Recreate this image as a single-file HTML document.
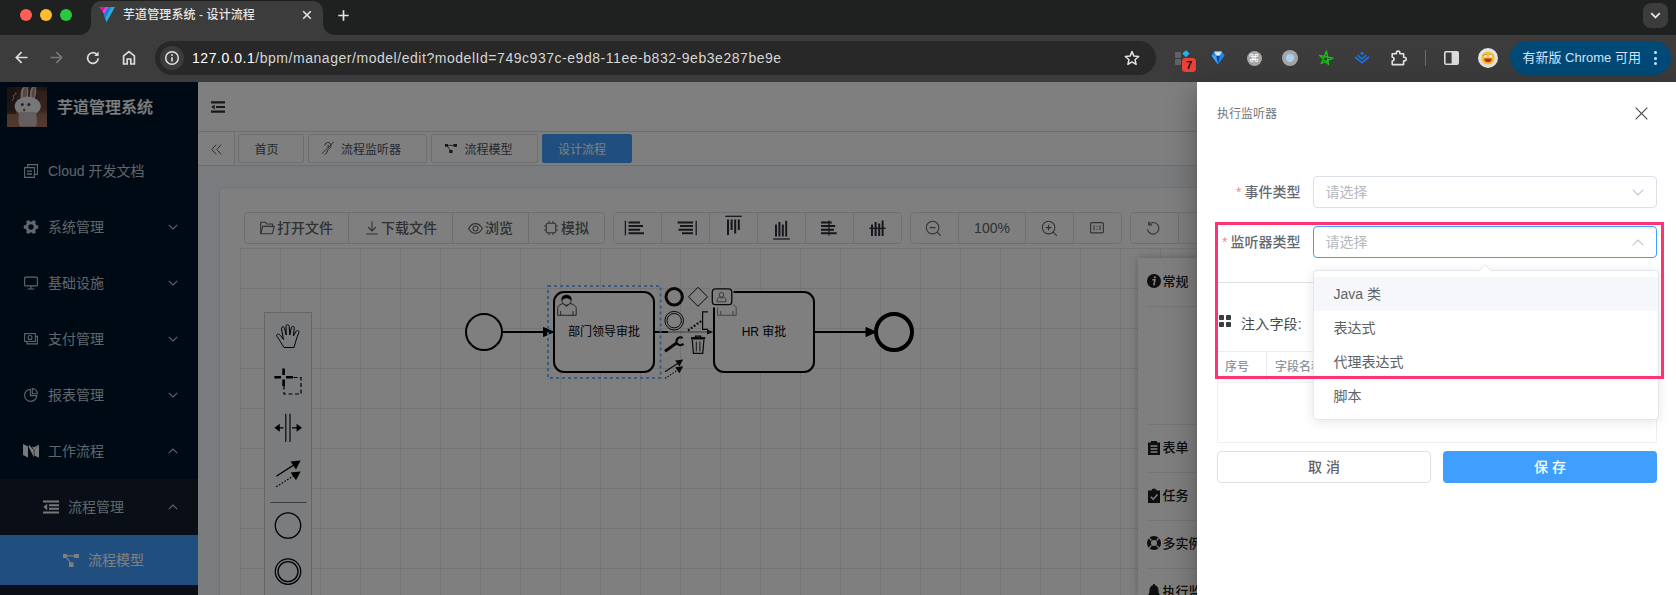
<!DOCTYPE html>
<html lang="zh-CN">
<head>
<meta charset="utf-8">
<title>芋道管理系统 - 设计流程</title>
<style>
*{box-sizing:border-box;margin:0;padding:0}
html,body{width:1676px;height:595px;overflow:hidden;background:#808080}
body{position:relative;font-family:"Liberation Sans","Noto Sans CJK SC",sans-serif;font-size:14px;color:#303133;-webkit-font-smoothing:antialiased}
.abs{position:absolute}
svg{display:block;overflow:visible}
/* ---------- browser chrome ---------- */
#tabstrip{position:absolute;left:0;top:0;width:1676px;height:35px;background:#1f2020}
#toolbar{position:absolute;left:0;top:35px;width:1676px;height:47px;background:#3c3c3c}
#tab{position:absolute;left:91px;top:1px;width:232px;height:34px;background:#3c3c3c;border-radius:10px 10px 0 0}
#tab:before,#tab:after{content:"";position:absolute;bottom:0;width:11px;height:11px;background:radial-gradient(circle at 0 0,transparent 10.5px,#3c3c3c 11px)}
#tab:before{left:-11px}
#tab:after{right:-11px;background:radial-gradient(circle at 100% 0,transparent 10.5px,#3c3c3c 11px)}
.tl{position:absolute;top:9px;width:12px;height:12px;border-radius:50%}
#tabtitle{position:absolute;left:123px;top:6px;font-weight:500;font-size:12px;line-height:18px;color:#e6e6e6;white-space:nowrap;letter-spacing:.1px}
#urlbar{position:absolute;left:155px;top:41px;width:1001px;height:34px;border-radius:17px;background:#282828}
#urltext{position:absolute;left:192px;top:48.300px;font-size:14px;line-height:20px;color:#d6d6d6;white-space:nowrap;letter-spacing:.54px}
#urltext b{font-weight:400;color:#fff}
#pill{position:absolute;left:1510px;top:41px;width:161px;height:34px;border-radius:17px;background:#004a77}
#pill i{position:absolute;left:143.5px;width:3px;height:3px;border-radius:50%;background:#c2e7ff}
#pill span{position:absolute;left:12.5px;top:7px;font-size:13px;line-height:20px;color:#d3e3fd;white-space:nowrap}
/* ---------- app ---------- */
#app{position:absolute;left:0;top:82px;width:1676px;height:513px;overflow:hidden;background:#fff}
#side{position:absolute;left:0;top:0;width:198px;height:513px;background:#001529;color:#bfcbd9}
#side .mi{position:absolute;left:0;width:198px;height:56px;line-height:56px;font-size:14px;white-space:nowrap}
#side .mi span{position:absolute;left:48px;top:0}
#side .mi svg.ic{position:absolute;left:23px;top:21px}
#side .mi svg.ar{position:absolute;left:168px;top:25px}
#main{position:absolute;left:198px;top:0;width:1478px;height:513px;background:#fff}
#navbar{position:absolute;left:0;top:0;width:1478px;height:50px;background:#fff;border-bottom:1px solid #e2e4e8;box-shadow:0 1px 4px rgba(0,21,41,.08)}
#tags{position:absolute;left:0;top:50px;width:1478px;height:34px;background:#fff;border-bottom:1px solid #d8dce5;box-shadow:0 1px 3px 0 rgba(0,0,0,.12),0 0 3px 0 rgba(0,0,0,.04)}
.tag{position:absolute;top:2px;height:29px;line-height:30px;border:1px solid #d8dce5;color:#495060;background:#fff;font-size:12px;white-space:nowrap;border-radius:2px}
.tag.on{background:#409eff;border-color:#409eff;color:#fff}
#content{position:absolute;left:0;top:84px;width:1478px;height:429px;background:#f5f7f9}
#card{position:absolute;left:21px;top:21px;width:1500px;height:500px;background:#fff;border:1px solid #e4e7ed;border-radius:4px}
.bg{position:absolute;top:130px;height:32px;border:1px solid #dcdfe6;border-radius:4px;background:#fff;display:flex}
.bg>div{flex:none;height:30px;border-left:1px solid #dcdfe6;position:relative;font-size:14px;line-height:30px;color:#606266;font-weight:500;white-space:nowrap}
.bg>div:first-child{border-left:0}

#grid{background-color:#fff;background-image:linear-gradient(#e8e8e8 1px,transparent 1px),linear-gradient(90deg,#e8e8e8 1px,transparent 1px),linear-gradient(#fafafa 1px,transparent 1px),linear-gradient(90deg,#fafafa 1px,transparent 1px);background-size:40px 40px,40px 40px,10px 10px,10px 10px}
#palette{background:#f6f8fa;border:1px solid #ccc}
#panel{background:#fff;box-shadow:0 0 8px rgba(0,0,0,.25)}
#panel .pi{position:absolute;left:0;width:480px;height:48px;line-height:47px;font-size:13px;font-weight:500;color:#1b1c1d;white-space:nowrap}
#panel .pi span{position:absolute;left:24.500px;top:0}
#panel .pl{position:absolute;left:8px;width:472px;height:1px;background:#e6ebf5}
#overlay{position:absolute;left:0;top:82px;width:1676px;height:513px;background:rgba(0,0,0,.5)}
/* ---------- drawer ---------- */
#drawer{position:absolute;left:1197px;top:82px;width:479px;height:513px;background:#fff;box-shadow:0 8px 10px -5px rgba(0,0,0,.2),0 16px 24px 2px rgba(0,0,0,.14),0 6px 30px 5px rgba(0,0,0,.12)}

#drawer .lab{position:absolute;left:0;width:103.500px;height:32px;line-height:32px;text-align:right;font-size:14px;font-weight:500;color:#666a70;white-space:nowrap}
#drawer .lab i{font-style:normal;color:#f78989;margin-right:3px;font-weight:400;font-family:"Liberation Sans",sans-serif}
#drawer .sel{position:absolute;left:116px;width:344px;height:32px;border:1px solid #dcdfe6;border-radius:4px;background:#fff}
#drawer .sel span{position:absolute;left:11.500px;top:-.3px;line-height:30px;font-size:14px;color:#b4b8bf;white-space:nowrap}
#drawer .th{font-size:12px;line-height:18px;color:#909399;font-weight:500;white-space:nowrap}
#drawer .btn{height:32px;line-height:30px;border-radius:4px;text-align:center;font-size:14px;font-weight:500;white-space:nowrap}
#dd{position:absolute;left:115.500px;top:188px;width:346px;height:149.500px;background:#fff;border:1px solid #e4e7ed;border-radius:4px;box-shadow:0 2px 12px 0 rgba(0,0,0,.1)}
#dd .opt{position:absolute;left:0;width:344px;height:34px;line-height:34px;padding-left:20px;font-size:14px;color:#606266;white-space:nowrap}
#dd .opt.hov{background:#f5f7fa}
</style>
</head>
<body>
<!-- chrome -->
<div id="tabstrip"></div>
<div id="toolbar"></div>
<div id="tab"></div>
<div class="tl" style="left:20px;background:#ff5f57"></div>
<div class="tl" style="left:40px;background:#febc2e"></div>
<div class="tl" style="left:60px;background:#28c840"></div>
<div id="tabtitle">芋道管理系统 - 设计流程</div>
<div id="urlbar"></div>
<div id="urltext"><b>127.0.0.1</b>/bpm/manager/model/edit?modelId=749c937c-e9d8-11ee-b832-9eb3e287be9e</div>

<!-- tab icons -->
<svg class="abs" style="left:99px;top:7px" width="16" height="16" viewBox="0 0 16 16"><polygon points="0,0 6.2,0 3.6,4.6" fill="#c81fb0"/><polygon points="6.2,0 3.6,4.6 5,7.2 9.2,0" fill="#ff3bc8"/><polygon points="5,7.2 9.2,0 16,0 7.4,15.6 " fill="#29abe2"/><polygon points="9.2,0 12.4,0 6.1,11.3 5,7.2" fill="#1c7fd6"/></svg>
<svg class="abs" style="left:302px;top:10px" width="10" height="10" viewBox="0 0 10 10"><path d="M1.2 1.2L8.8 8.8M8.8 1.2L1.2 8.8" stroke="#e3e3e3" stroke-width="1.6" fill="none"/></svg>
<svg class="abs" style="left:337.500px;top:9.500px" width="11" height="11" viewBox="0 0 11 11"><path d="M5.500 .3V10.700M.3 5.500H10.700" stroke="#e3e3e3" stroke-width="1.7" fill="none"/></svg>
<div class="abs" style="left:1643px;top:3px;width:25px;height:25px;border-radius:8px;background:#3c3c3c"></div>
<svg class="abs" style="left:1650px;top:12px" width="11" height="7" viewBox="0 0 11 7"><path d="M1.2 1.2L5.5 5.4L9.8 1.2" stroke="#e3e3e3" stroke-width="1.8" fill="none"/></svg>
<!-- nav icons -->
<svg class="abs" style="left:15px;top:51px" width="13" height="13" viewBox="0 0 13 13"><path d="M12.5 6.5H1.8M6.6 1.2L1.3 6.5L6.6 11.8" stroke="#dcdcdc" stroke-width="1.7" fill="none"/></svg>
<svg class="abs" style="left:50px;top:51px" width="13" height="13" viewBox="0 0 13 13"><path d="M.5 6.5H11.2M6.4 1.2L11.7 6.5L6.4 11.8" stroke="#777" stroke-width="1.7" fill="none"/></svg>
<svg class="abs" style="left:86px;top:51px" width="14" height="14" viewBox="0 0 14 14"><path d="M12.2 7.2A5.3 5.3 0 1 1 10.6 3.2" stroke="#dcdcdc" stroke-width="1.7" fill="none"/><path d="M12.6 .6V5H8.2Z" fill="#dcdcdc"/></svg>
<svg class="abs" style="left:122px;top:50px" width="14" height="15" viewBox="0 0 14 15"><path d="M1.6 14V5.8L7 1.6L12.4 5.8V14H8.8V9H5.2V14Z" stroke="#dcdcdc" stroke-width="1.7" fill="none" stroke-linejoin="miter"/></svg>
<div class="abs" style="left:160px;top:46px;width:24px;height:24px;border-radius:12px;background:#3c3c3c"></div>
<svg class="abs" style="left:164px;top:50px" width="16" height="16" viewBox="0 0 16 16"><circle cx="8" cy="8" r="6.3" stroke="#e3e3e3" stroke-width="1.5" fill="none"/><path d="M8 7.2V11.4" stroke="#e3e3e3" stroke-width="1.6"/><circle cx="8" cy="5" r=".95" fill="#e3e3e3"/></svg>
<svg class="abs" style="left:1124px;top:50px" width="16" height="16" viewBox="0 0 16 16"><path d="M8 1.6L9.9 6.1L14.7 6.5L11 9.7L12.1 14.4L8 11.9L3.9 14.4L5 9.7L1.3 6.5L6.1 6.1Z" stroke="#e3e3e3" stroke-width="1.5" fill="none" stroke-linejoin="round"/></svg>

<!-- extension icons -->
<div class="abs" style="left:1175px;top:52px;width:6px;height:6px;background:#5f6368;border-radius:1px"></div>
<div class="abs" style="left:1175px;top:59px;width:6px;height:6px;background:#5f6368;border-radius:1px"></div>
<svg class="abs" style="left:1182px;top:50px" width="8" height="8" viewBox="0 0 8 8"><path d="M4 .3L7.7 3.6L4 7.2L.3 3.6Z" fill="#1db4f0"/></svg>
<div class="abs" style="left:1182px;top:58px;width:14px;height:14px;border-radius:3.5px;background:#ea4335;color:#111;font-size:11px;font-weight:700;line-height:14px;text-align:center">7</div>
<svg class="abs" style="left:1211px;top:51px" width="14" height="14" viewBox="0 0 14 14"><path d="M3.2 .6H10.8L13.6 4.4L7 13.6L.4 4.4Z" fill="#1e88e5"/><path d="M3.2 .6L5 4.4L7 .6L9 4.4L10.8 .6Z" fill="#bfe3ff"/><path d="M5 4.4H9L7 13.6Z" fill="#0d47a1"/><path d="M.4 4.4H5L7 13.6Z" fill="#42a5f5"/><path d="M5 4.4L7 .6L9 4.4Z" fill="#fff"/></svg>
<div class="abs" style="left:1246.5px;top:50.5px;width:15px;height:15px;border-radius:50%;background:#a9a9a9;color:#fff;font-size:11px;line-height:15px;text-align:center;font-family:'DejaVu Sans',sans-serif">&#8984;</div>
<div class="abs" style="left:1282px;top:50px;width:16px;height:16px;border-radius:50%;background:#a6a6a6"></div>
<div class="abs" style="left:1286px;top:54px;width:8px;height:8px;border-radius:50%;background:#a9d3f3"></div>
<svg class="abs" style="left:1318px;top:50px" width="16" height="16" viewBox="0 0 16 16"><path d="M8.6 1L10.6 14.6L1.4 5.4L15 8.2L3.2 13.4Z" stroke="#19c319" stroke-width="1.3" fill="none" stroke-linejoin="round"/></svg>
<svg class="abs" style="left:1354px;top:51px" width="16" height="14" viewBox="0 0 16 14"><path d="M1 6L8 11.6L15 6" stroke="#1a73e8" stroke-width="1.7" fill="none"/><path d="M3.6 4.2L8 7.8L12.4 4.2" stroke="#1a73e8" stroke-width="1.7" fill="none"/><path d="M8 .6L10 2.4L8 4.2L6 2.4Z" fill="#1a73e8"/></svg>
<svg class="abs" style="left:1390px;top:49px" width="18" height="18" viewBox="0 0 18 18"><path d="M2.2 4.8H6.3V3.9A1.8 1.8 0 0 1 9.9 3.9V4.8H13.6V8.3H14.4A1.8 1.8 0 0 1 14.4 11.9H13.6V15.6H2.2V12A1.9 1.9 0 0 0 2.2 8.2Z" stroke="#e3e3e3" stroke-width="1.6" fill="none" stroke-linejoin="round"/></svg>
<div class="abs" style="left:1424.5px;top:50px;width:1.5px;height:16px;background:#6b6b6b"></div>
<svg class="abs" style="left:1444px;top:51px" width="15" height="14" viewBox="0 0 15 14"><rect x=".8" y=".8" width="13.4" height="12.4" rx="1.2" stroke="#dcdcdc" stroke-width="1.6" fill="none"/><rect x="7.6" y="1" width="6.4" height="12" fill="#dcdcdc"/></svg>
<div class="abs" style="left:1478px;top:48px;width:20px;height:20px;border-radius:50%;background:#e4e4e4"></div>
<svg class="abs" style="left:1481px;top:51px" width="14" height="14" viewBox="0 0 14 14"><circle cx="7" cy="7" r="6.6" fill="#fbc02d"/><path d="M3.2 7.4H10.8A3.8 3.8 0 0 1 3.2 7.4Z" fill="#c62828"/><path d="M2.6 4.6L5.4 3.6M8.6 3.6L11.4 4.6" stroke="#5d4037" stroke-width="1" fill="none"/><circle cx="9.6" cy="5" r="1.6" fill="#fff"/><circle cx="4.4" cy="5" r="1.2" fill="#fff"/></svg>
<div id="pill"><span>有新版 Chrome 可用</span><i style="top:10px"></i><i style="top:15.5px"></i><i style="top:21px"></i></div>

<!-- app -->
<div id="app">
  <div id="side">

    <svg class="abs" style="left:7px;top:5px" width="40" height="40" viewBox="0 0 40 40">
      <defs><linearGradient id="lg" x1="0" y1="0" x2="0" y2="1"><stop offset="0" stop-color="#3e2e2a"/><stop offset=".55" stop-color="#5a4038"/><stop offset=".7" stop-color="#9a6a58"/><stop offset="1" stop-color="#a87462"/></linearGradient></defs>
      <rect width="40" height="40" fill="url(#lg)"/>
      <rect x="0" y="0" width="9" height="27" fill="#2a201e" opacity=".6"/><rect x="30" y="4" width="10" height="20" fill="#8a5a48" opacity=".35"/>
      <path d="M14 14C13 6 14 1 17 0H21C22 5 21 10 20 14Z" fill="#d9d2d0"/><path d="M16 12C15.500 6 16 2 18 0H20C20.500 5 19.500 9 19 12Z" fill="#b98a80"/>
      <path d="M23 14C22.500 7 23 2 25 0H29C30 5 28.500 10 27 14Z" fill="#d9d2d0"/><path d="M24.500 12C24.500 7 25 3 26.500 0H28C28.500 4 27.500 9 26.500 12Z" fill="#b98a80"/>
      <ellipse cx="20.700" cy="19.200" rx="13" ry="9.600" fill="#eeeeee"/>
      <path d="M12 25C11 32 11.500 37 13 39.500H29C30.500 36 30 30 28.500 25Z" fill="#cbbcbc"/>
      <circle cx="15.300" cy="17.600" r="1.500" fill="#35507a"/><circle cx="21.800" cy="17.600" r="1.600" fill="#35507a"/>
      <ellipse cx="17.200" cy="23" rx="1.100" ry="1.400" fill="#8a4a3a"/>
      <path d="M5 14L7 11L6 9L9 7L8.500 5" stroke="#cfcfcf" stroke-width=".8" fill="none"/>
    </svg>
    <div class="abs" style="left:57px;top:14px;font-size:16px;line-height:24px;font-weight:500;-webkit-text-stroke:.2px #fff;color:#fff;white-space:nowrap">芋道管理系统</div>

    <div class="mi" style="top:61px"><svg class="ic" style="left:24px" width="14" height="14" viewBox="0 0 14 14"><path d="M.6 3.600H10.400V13.400H.6Z" stroke="#bfcbd9" stroke-width="1.100" fill="none"/><path d="M3.700 3.500V.6H13.400V10.400H10.500" stroke="#bfcbd9" stroke-width="1.100" fill="none"/><path d="M3 7.200H8M3 10H8" stroke="#bfcbd9" stroke-width="1.300"/></svg><span>Cloud 开发文档</span></div>
    <div class="mi" style="top:117px"><svg class="ic" style="left:24px" width="14" height="14" viewBox="0 0 14 14"><circle cx="7" cy="7" r="4.100" stroke="#c4cedb" stroke-width="2.900" fill="none"/><rect x="5.300" y="-.2" width="3.400" height="3.400" rx=".5" transform="rotate(30 7 7)" fill="#c4cedb" /><rect x="5.300" y="-.2" width="3.400" height="3.400" rx=".5" transform="rotate(90 7 7)" fill="#c4cedb" /><rect x="5.300" y="-.2" width="3.400" height="3.400" rx=".5" transform="rotate(150 7 7)" fill="#c4cedb" /><rect x="5.300" y="-.2" width="3.400" height="3.400" rx=".5" transform="rotate(210 7 7)" fill="#c4cedb" /><rect x="5.300" y="-.2" width="3.400" height="3.400" rx=".5" transform="rotate(270 7 7)" fill="#c4cedb" /><rect x="5.300" y="-.2" width="3.400" height="3.400" rx=".5" transform="rotate(330 7 7)" fill="#c4cedb" /></svg><span>系统管理</span><svg class="ar" width="10" height="6" viewBox="0 0 10 6"><path d="M.8 .8L5 5L9.2 .8" stroke="#bfcbd9" stroke-width="1.1" fill="none"/></svg></div>
    <div class="mi" style="top:173px"><svg class="ic" style="left:24px" width="14" height="14" viewBox="0 0 14 14"><rect x=".6" y="1.100" width="12.800" height="8.800" rx="1" stroke="#bfcbd9" stroke-width="1.100" fill="none"/><path d="M7 10V12.800M3.600 13H10.400" stroke="#bfcbd9" stroke-width="1.100"/></svg><span>基础设施</span><svg class="ar" width="10" height="6" viewBox="0 0 10 6"><path d="M.8 .8L5 5L9.2 .8" stroke="#bfcbd9" stroke-width="1.1" fill="none"/></svg></div>
    <div class="mi" style="top:229px"><svg class="ic" style="left:24px" width="14" height="14" viewBox="0 0 14 14"><rect x=".6" y="1.600" width="10.800" height="7.800" stroke="#bfcbd9" stroke-width="1.100" fill="none"/><circle cx="6" cy="5.500" r="2" stroke="#bfcbd9" stroke-width="1.100" fill="none"/><path d="M3 9.500V11.900H13.400V4.400H11.500" stroke="#bfcbd9" stroke-width="1.100" fill="none"/></svg><span>支付管理</span><svg class="ar" width="10" height="6" viewBox="0 0 10 6"><path d="M.8 .8L5 5L9.2 .8" stroke="#bfcbd9" stroke-width="1.1" fill="none"/></svg></div>
    <div class="mi" style="top:285px"><svg class="ic" style="left:24px" width="14" height="14" viewBox="0 0 14 14"><path d="M6.400 1.200A6.100 6.100 0 1 0 12.800 7.600H6.400Z" stroke="#bfcbd9" stroke-width="1.100" fill="none"/><path d="M8.300 .6A5.200 5.200 0 0 1 13.400 5.700H8.300Z" stroke="#bfcbd9" stroke-width="1.100" fill="none"/></svg><span>报表管理</span><svg class="ar" width="10" height="6" viewBox="0 0 10 6"><path d="M.8 .8L5 5L9.2 .8" stroke="#bfcbd9" stroke-width="1.1" fill="none"/></svg></div>
    <div class="mi" style="top:341px"><svg class="ic" style="left:23px" width="16" height="14" viewBox="0 0 16 14"><path d="M0 0L5 2.500V13.600L0 11.100Z" fill="#f4f4f4"/><path d="M5.600 2.800L10.800 13.200V6.300L6 .8Z" fill="#f4f4f4"/><path d="M11.400 5.800L16 .4V13.800L11.400 11.500Z" fill="#f4f4f4"/><path d="M10.900 6.200L15.600 .8L10.900 3.300L9 2.600Z" fill="#f4f4f4"/></svg><span>工作流程</span><svg class="ar" width="10" height="6" viewBox="0 0 10 6"><path d="M.8 5.2L5 1L9.2 5.2" stroke="#bfcbd9" stroke-width="1.1" fill="none"/></svg></div>
    <div class="abs" style="left:0;top:397px;width:198px;height:116px;background:#141f2f"></div>
    <div class="mi" style="top:397px"><svg class="ic" style="left:43px;top:21px" width="16" height="14" viewBox="0 0 16 14"><path d="M0 1.400H16M6 5.200H16M6 8.800H16M0 12.600H16" stroke="#f0f0f0" stroke-width="2"/><path d="M4.200 3.800V10.200L.4 7Z" fill="#f0f0f0"/></svg><span style="left:68px">流程管理</span><svg class="ar" width="10" height="6" viewBox="0 0 10 6"><path d="M.8 5.2L5 1L9.2 5.2" stroke="#bfcbd9" stroke-width="1.1" fill="none"/></svg></div>
    <div class="abs" style="left:0;top:453px;width:198px;height:50px;background:#409eff"></div>
    <div class="mi" style="top:453px;height:50px;line-height:50px;color:#fff"><svg class="ic" style="left:63px;top:19px" width="16" height="13" viewBox="0 0 16 13"><rect x="0" y="0" width="4" height="4" fill="#fff"/><rect x="11" y="0" width="5" height="4" fill="#fff"/><rect x="6" y="8.500" width="4.500" height="4.500" fill="#fff"/><path d="M3 1.800H12M3.500 3.500L8 9.500" stroke="#fff" stroke-width="1.200"/></svg><span style="left:88px">流程模型</span></div>
  </div>
  <div id="main">

    <div id="navbar"><svg class="abs" style="left:13px;top:19px" width="14" height="12" viewBox="0 0 14 12"><path d="M0 1.400H14M5 6H14M0 10.600H14" stroke="#303133" stroke-width="2.200"/><path d="M3.600 3.600V8.400L.3 6Z" fill="#303133"/></svg></div>
    <div id="tags">
      <svg class="abs" style="left:13px;top:12px" width="11" height="11" viewBox="0 0 11 11"><path d="M5.200 .6L.8 5.500L5.200 10.400M10.200 .6L5.800 5.500L10.200 10.400" stroke="#5a5e66" stroke-width="1" fill="none"/></svg>
      <div class="abs" style="left:36px;top:0;width:1px;height:34px;background:#d8dce5"></div>
      <div class="tag" style="left:40px;width:66px;padding-left:15.500px">首页</div>
      <div class="tag" style="left:110px;width:119px;padding-left:32px"><svg class="abs" style="left:12px;top:6px" width="14" height="14" viewBox="0 0 14 14"><path d="M3.500 13.500C5.500 13 6 11.500 6.300 10C6.600 8.500 8.500 8 9.500 6.500C10.500 5 10 2.500 8 1.700C6 1 4 2.200 3.800 4.500" stroke="#495060" stroke-width="1" fill="none"/><path d="M6 5.500C6.500 4.200 8 4.300 8 5.600C8 6.500 7 7 6.500 7.500" stroke="#495060" stroke-width=".9" fill="none"/><path d="M12.800 .8L.8 12.800" stroke="#495060" stroke-width=".9"/></svg>流程监听器</div>
      <div class="tag" style="left:233px;width:107px;padding-left:32.500px"><svg class="abs" style="left:12.500px;top:9px" width="12" height="9" viewBox="0 0 12 9"><rect x="0" y="0" width="3" height="2.800" fill="#2b2f3a"/><rect x="8.500" y="0" width="3.500" height="2.800" fill="#2b2f3a"/><rect x="4.300" y="6" width="3.200" height="3" fill="#2b2f3a"/><path d="M2.500 1.400H9M2.500 2.200L5.500 6.500" stroke="#2b2f3a" stroke-width=".8"/></svg>流程模型</div>
      <div class="tag on" style="left:344px;width:90px;padding-left:15px">设计流程</div>
    </div>
    <div id="content"><div id="card"></div></div>


    <!-- canvas grid -->
    <div class="abs" id="grid" style="left:42px;top:166px;width:1436px;height:347px"></div>
    <!-- properties panel -->
    <div class="abs" id="panel" style="left:940px;top:176px;width:480px;height:340px">
      <div class="pi" style="top:0"><svg class="abs" style="left:9px;top:16.0px" width="14" height="14" viewBox="0 0 14 14"><circle cx="7" cy="7" r="7" fill="#1b1c1d"/><path d="M5.300 5.800H8L6.900 10.600H8" stroke="#fff" stroke-width="1.500" fill="none"/><circle cx="7.900" cy="3.300" r="1.100" fill="#fff"/></svg><span>常规</span></div>
      <div class="pl" style="top:48px"></div>
      <div class="pl" style="top:166px"></div>
      <div class="pi" style="top:166px"><svg class="abs" style="left:10px;top:17.0px" width="12" height="14" viewBox="0 0 12 14"><path d="M0 1.500H3V0H9V1.500H12V14H0Z" fill="#1b1c1d"/><path d="M2.500 5H9.500M2.500 8H9.500M2.500 11H9.500" stroke="#fff" stroke-width="1.300"/></svg><span>表单</span></div>
      <div class="pl" style="top:214px"></div>
      <div class="pi" style="top:214px"><svg class="abs" style="left:10px;top:16.0px" width="12" height="15" viewBox="0 0 12 15"><path d="M0 2.500H3.500C3.500 -.3 8.500 -.3 8.500 2.500H12V15H0Z" fill="#1b1c1d"/><path d="M2.800 8.800L5.200 11.200L9.500 6.500" stroke="#fff" stroke-width="1.600" fill="none"/></svg><span>任务</span></div>
      <div class="pl" style="top:262px"></div>
      <div class="pi" style="top:262px"><svg class="abs" style="left:9px;top:16.0px" width="14" height="14" viewBox="0 0 14 14"><circle cx="7" cy="7" r="5" stroke="#1b1c1d" stroke-width="4" fill="none"/><path d="M2 2L4.500 4.500M12 2L9.500 4.500M2 12L4.500 9.500M12 12L9.500 9.500" stroke="#fff" stroke-width="1.300"/></svg><span>多实例</span></div>
      <div class="pl" style="top:310px"></div>
      <div class="pi" style="top:310px"><svg class="abs" style="left:9px;top:16.0px" width="14" height="15" viewBox="0 0 14 15"><path d="M7 0C7.800 0 8.200 .6 8.200 1.300C10.500 2 11.500 4 11.500 6.500C11.500 9.500 12.500 10.500 14 12H0C1.500 10.500 2.500 9.500 2.500 6.500C2.500 4 3.500 2 5.800 1.300C5.800 .6 6.200 0 7 0ZM5 13H9C9 15.600 5 15.600 5 13Z" fill="#1b1c1d"/></svg><span>执行监听器</span></div>
    </div>
    <!-- palette -->
    <div class="abs" id="palette" style="left:66px;top:230px;width:48px;height:300px">
      <svg class="abs" style="left:-1px;top:-1px" width="48" height="300" viewBox="264 312 48 300">
        <g stroke="#000" fill="none" stroke-width="1">
          <path d="M284 347.500C281 343 279.500 339.500 277 336.500C275.500 334.500 278.500 333 280.500 335.500L283.500 339.500L281.500 329C281 326.500 284 326 284.600 328.500L286.200 335L286 326.500C286 324 289 324 289.200 326.500L289.800 335L291.300 328C291.800 325.500 294.600 326 294.300 328.500L293.300 336L296 331.500C297.300 329.500 299.800 330.800 298.600 333.200C296.500 338 295.500 342.500 294 347.500Z"/>
        </g>
        <g stroke="#000" fill="none">
          <path d="M283.600 368.500V375M283.600 379.500V386M274.400 377.300H281M286 377.300H293" stroke-width="2.600"/>
          <path d="M287 377.500H301V394H284V381" stroke-width="1.200" stroke-dasharray="4 2.500"/>
          <path d="M285.800 413.700V442M290 413.700V442" stroke-width="1.100"/>
          <path d="M277 427.800H283.500M292 427.800H298.500" stroke-width="1.200"/>
          <path d="M274.400 427.800L279.800 423.800V431.800Z M302 427.800L296.600 423.800V431.800Z" fill="#000" stroke="none"/>
          <path d="M276.300 476.200L294 464.900" stroke-width="1.300"/>
          <path d="M300.600 460.600L296 469.400L290.600 461.600Z" fill="#000" stroke="none"/>
          <path d="M276.300 486.700L294 475.600" stroke-width="1.200" stroke-dasharray="1.600 1.600"/>
          <path d="M300.600 471.400L296 480.200L290.600 472.400Z" fill="#000" stroke="none"/>
          <path d="M270.500 502.500H306.500" stroke="#777" stroke-width="1"/>
          <circle cx="288" cy="525.500" r="12.700" stroke-width="1.300"/>
          <circle cx="288" cy="571.600" r="12.700" stroke-width="1.300"/>
          <circle cx="288" cy="571.600" r="10" stroke-width="1.300"/>
        </g>
      </svg>
    </div>
    <!-- bpmn diagram : svg in page coordinates -->
    <svg class="abs" style="left:-198px;top:-82px" width="1676" height="595" viewBox="0 0 1676 595">
      <g stroke="#000" fill="none" stroke-width="2">
        <circle cx="484" cy="332" r="18" fill="#fff"/>
        <path d="M502 332H547"/>
        <path d="M553.500 332L543.500 327.500V336.500Z" fill="#000" stroke-width="1"/>
        <rect x="554" y="292" width="100" height="80" rx="10" fill="#fff"/>
        <path d="M654 332H668"/>
        <path d="M668 332H708" stroke="#333" stroke-width=".7"/>
        <path d="M713.500 332L707 329.600V334.400Z" fill="#222" stroke="none"/>
        <rect x="714" y="292" width="100" height="80" rx="10" fill="#fff"/>
        <path d="M814 332H869"/>
        <path d="M876 332L866 327.500V336.500Z" fill="#000" stroke-width="1"/>
        <circle cx="894" cy="332" r="18" stroke-width="4" fill="#fff"/>
      </g>
      <rect x="548" y="286" width="112.500" height="92" fill="none" stroke="#7cb4ff" stroke-width="2" stroke-dasharray="3 3" stroke-dashoffset="0"/>
      <!-- user icon task1 -->
      <g stroke="#000" stroke-width=".7" fill="#fff">
        <path d="M557.700 315.300V308.500C557.700 305.500 560 304.300 563.300 303.500L566.500 306.500L569.800 303.500C573 304.300 576.200 305.500 576.200 308.500V315.300Z"/>
        <path d="M560.700 315.300V311M573 315.300V311" fill="none"/>
        <circle cx="566.500" cy="300.500" r="4.600"/>
        <path d="M561.900 300C561.500 296 564 295.200 566.500 295.200C569 295.200 571.500 296 571.100 300C569.500 298.500 568 298 566.500 298C565 298 563.500 298.500 561.900 300Z" fill="#000"/>
      </g>
      <!-- user icon task2 (partly hidden) -->
      <g stroke="#555" stroke-width=".7" fill="#fff">
        <path d="M717.700 315.300V308.500C717.700 305.500 720 304.300 723.300 303.500L726.500 306.500L729.800 303.500C733 304.300 736.200 305.500 736.200 308.500V315.300Z"/>
        <path d="M720.700 315.300V311M733 315.300V311" fill="none"/>
      </g>
      <!-- context pad -->
      <rect x="710.500" y="286" width="23" height="21.500" fill="#fff"/>
      <g stroke="#111" fill="none">
        <circle cx="674.200" cy="296.800" r="8.200" stroke-width="3"/>
        <path d="M698 287.300L707.500 296.800L698 306.300L688.500 296.800Z" stroke-width="1" fill="#fff"/>
        <rect x="712.300" y="288.800" width="19.500" height="15.800" rx="3.200" stroke-width="1.300" fill="#fff"/>
        <g stroke-width=".6" stroke="#222"><path d="M717.200 301.800V299.400C717.200 298 718.500 297.500 719.800 297.200L721.500 298.600L723.200 297.200C724.500 297.500 725.800 298 725.800 299.400V301.800Z"/><circle cx="721.500" cy="294.800" r="2.300"/></g>
        <circle cx="674.200" cy="320.700" r="9.300" stroke-width="1" fill="#fff"/>
        <circle cx="674.200" cy="320.700" r="7.200" stroke-width="1"/>
        <path d="M708 311.800H702.600V329.400H708" stroke-width="1.200"/>
        <path d="M688 330.500L702 320.500" stroke-width="2.200" stroke-dasharray="1.800 1.800"/>
        <path d="M665 351.300L677 342.800" stroke-width="3"/>
        <path d="M682.600 338A3.900 3.900 0 1 0 683.400 343.800" stroke-width="2.300"/>
        <path d="M691 338.300H705.200" stroke-width="2.400"/><path d="M695.500 337.500V336.200H700.700V337.500" stroke-width="1.300"/>
        <path d="M692.300 340L693.400 353.300H702.800L703.900 340" stroke-width="1.200"/>
        <path d="M696.300 341.500V351.500M699.900 341.500V351.500" stroke-width=".9"/>
        <path d="M665 371.800L678 363.200" stroke-width="1.100"/>
        <path d="M683.200 359.600L679.400 366.600L675.200 360.600Z" fill="#111" stroke="none"/>
        <path d="M665 378.400L678 369.800" stroke-width="1.100" stroke-dasharray="1.500 1.500"/>
        <path d="M683.200 366.200L679.400 373.200L675.200 367.200Z" fill="#111" stroke="none"/>
      </g>
      <text x="604" y="336.300" font-size="12" text-anchor="middle" fill="#000" font-family="'Liberation Sans','Noto Sans CJK SC',sans-serif">部门领导审批</text>
      <text x="764" y="336.300" font-size="12" text-anchor="middle" fill="#000" font-family="'Liberation Sans','Noto Sans CJK SC',sans-serif">HR 审批</text>
    </svg>
    <!-- toolbars (coords relative to #main) -->
    <div class="bg" style="left:46px;width:361px">
      <div style="width:103px"><svg class="abs" style="left:15px;top:8px" width="15" height="14" viewBox="0 0 15 14"><path d="M.7 12.800V1.200H5.200L6.600 3H12.600V5.300" stroke="#606266" stroke-width="1.100" fill="none" stroke-linejoin="round"/><path d="M.7 12.800L2.800 5.400H14.300L12.200 12.800Z" stroke="#606266" stroke-width="1.100" fill="none" stroke-linejoin="round"/></svg><span style="position:absolute;left:32px">打开文件</span></div>
      <div style="width:104px"><svg class="abs" style="left:17px;top:8px" width="12" height="14" viewBox="0 0 12 14"><path d="M6 .5V9.800M2 6L6 10L10 6M.3 13H11.700" stroke="#606266" stroke-width="1.100" fill="none"/></svg><span style="position:absolute;left:32px">下载文件</span></div>
      <div style="width:76px"><svg class="abs" style="left:15px;top:9.500px" width="15" height="11" viewBox="0 0 15 11"><path d="M.6 5.500C2.500 2.200 5 .6 7.500 .6C10 .6 12.500 2.200 14.400 5.500C12.500 8.800 10 10.400 7.500 10.400C5 10.400 2.500 8.800 .6 5.500Z" stroke="#606266" stroke-width="1.100" fill="none"/><circle cx="7.500" cy="5.500" r="2.500" stroke="#606266" stroke-width="1.100" fill="none"/></svg><span style="position:absolute;left:32px">浏览</span></div>
      <div style="width:76px"><svg class="abs" style="left:15px;top:8px" width="14" height="14" viewBox="0 0 14 14"><rect x="2.300" y="2.300" width="9.400" height="9.400" rx="1.500" stroke="#606266" stroke-width="1.100" fill="none"/><path d="M5 0V2M9 0V2M5 12V14M9 12V14M0 5H2M0 9H2M12 5H14M12 9H14" stroke="#606266" stroke-width="1.100"/></svg><span style="position:absolute;left:32px">模拟</span></div>
    </div>
    <div class="bg" style="left:415px;width:289px">
      <div style="width:47px"><svg class="abs" style="left:10px;top:7px" width="22" height="16" viewBox="0 0 22 16"><path d="M1.400 .7V15.300" stroke="#2b2f3a" stroke-width="1.300"/><path d="M4.500 2.400H16M4.500 6H19M4.500 9.700H16M4.500 13.200H20" stroke="#2b2f3a" stroke-width="2"/></svg></div>
      <div style="width:48px"><svg class="abs" style="left:14px;top:7px" width="22" height="16" viewBox="0 0 22 16"><path d="M20.200 .7V15.300" stroke="#2b2f3a" stroke-width="1.300"/><path d="M1.500 2.400H17M4 6H17M2.500 9.700H17M6 13.200H17" stroke="#2b2f3a" stroke-width="2"/></svg></div>
      <div style="width:48px"><svg class="abs" style="left:15px;top:2px" width="17" height="22" viewBox="0 0 17 22"><path d="M.2 1.300H16.800" stroke="#2b2f3a" stroke-width="1.300"/><path d="M3 4.500V20M6.600 4.500V15M10.200 4.500V18.500M13.800 4.500V15" stroke="#2b2f3a" stroke-width="2"/></svg></div>
      <div style="width:48px"><svg class="abs" style="left:15px;top:6px" width="17" height="22" viewBox="0 0 17 22"><path d="M.2 20H16.800" stroke="#2b2f3a" stroke-width="1.300"/><path d="M3 5.500V17.500M6.400 3V17.500M9.800 5.500V17.500M13.200 1.800V17.500" stroke="#2b2f3a" stroke-width="2"/></svg></div>
      <div style="width:48px"><svg class="abs" style="left:14px;top:7px" width="18" height="16" viewBox="0 0 18 16"><path d="M9 .5V15.500" stroke="#2b2f3a" stroke-width="1.300"/><path d="M1 2.400H11.800M1 6H15.300M1 9.700H14M1 13.200H16.700" stroke="#2b2f3a" stroke-width="2"/></svg></div>
      <div style="width:48px"><svg class="abs" style="left:15px;top:7px" width="17" height="16" viewBox="0 0 17 16"><path d="M.3 8.300H16.700" stroke="#2b2f3a" stroke-width="1.300"/><path d="M3 4.500V16M6.600 2V16M10.200 3.500V16M13.600 .5V16" stroke="#2b2f3a" stroke-width="2"/></svg></div>
    </div>
    <div class="bg" style="left:712px;width:212px">
      <div style="width:47px"><svg class="abs" style="left:14px;top:6.500px" width="17" height="17" viewBox="0 0 17 17"><circle cx="7.600" cy="7.600" r="6.300" stroke="#606266" stroke-width="1.100" fill="none"/><path d="M12.200 12.200L15.800 15.800M4.800 7.600H10.400" stroke="#606266" stroke-width="1.100"/></svg></div>
      <div style="width:67px;text-align:center;font-weight:400">100%</div>
      <div style="width:48px"><svg class="abs" style="left:15px;top:7px" width="17" height="17" viewBox="0 0 17 17"><circle cx="7.600" cy="7.600" r="6.300" stroke="#606266" stroke-width="1.100" fill="none"/><path d="M12.200 12.200L15.800 15.800M4.800 7.600H10.400M7.600 4.800V10.400" stroke="#606266" stroke-width="1.100"/></svg></div>
      <div style="width:48px"><svg class="abs" style="left:16px;top:9px" width="14" height="12" viewBox="0 0 14 12"><rect x=".6" y=".6" width="12.800" height="10.300" rx="1.200" stroke="#606266" stroke-width="1.100" fill="none"/><path d="M4 3.300V8.200M10 3.300V8.200" stroke="#606266" stroke-width="1.100"/><path d="M7 3.800V4.800M7 6.700V7.700" stroke="#606266" stroke-width="1.100"/></svg></div>
    </div>
    <div class="bg" style="left:932px;width:200px">
      <div style="width:47px"><svg class="abs" style="left:15px;top:8px" width="14" height="14" viewBox="0 0 14 14"><path d="M2.600 3.600A5.800 5.800 0 1 1 1.400 8.400" stroke="#606266" stroke-width="1.100" fill="none"/><path d="M2.800 .6V3.900H6.100" stroke="#606266" stroke-width="1.100" fill="none"/></svg></div>
      <div style="width:48px"></div><div style="width:48px"></div>
    </div>
  </div>
</div>
<div id="overlay"></div>

<div id="drawer">
  <div class="abs" style="left:20px;top:23px;font-size:12px;line-height:18px;color:#72767b;white-space:nowrap">执行监听器</div>
  <svg class="abs" style="left:438px;top:25px" width="13" height="13" viewBox="0 0 13 13"><path d="M.7 .7L12.300 12.300M12.300 .7L.7 12.300" stroke="#4a4a4a" stroke-width="1.150" fill="none"/></svg>

  <div class="lab" style="top:94px"><i>*</i>事件类型</div>
  <div class="sel" style="top:94px"><span>请选择</span><svg class="abs" style="left:318px;top:11.500px" width="12" height="7" viewBox="0 0 12 7"><path d="M.7 .7L6 6L11.300 .7" stroke="#c0c4cc" stroke-width="1.100" fill="none"/></svg></div>
  <div class="lab" style="top:144px"><i>*</i>监听器类型</div>
  <div class="sel" style="top:144px;border-color:#409eff"><span>请选择</span><svg class="abs" style="left:318px;top:11.500px" width="12" height="7" viewBox="0 0 12 7"><path d="M.7 6.300L6 1L11.300 6.300" stroke="#c0c4cc" stroke-width="1.100" fill="none"/></svg></div>

  <div class="abs" style="left:20px;top:200px;width:440px;height:1px;background:#dcdfe6"></div>
  <svg class="abs" style="left:22px;top:233px" width="12" height="12" viewBox="0 0 12 12"><rect x="0" y="0" width="5" height="5" rx=".8" fill="#3a3d42"/><rect x="7" y="0" width="5" height="5" rx=".8" fill="#3a3d42"/><rect x="0" y="7" width="5" height="5" rx=".8" fill="#3a3d42"/><rect x="7" y="7" width="5" height="5" rx=".8" fill="#3a3d42"/></svg>
  <div class="abs" style="left:44px;top:232px;font-size:14px;line-height:20px;color:#44474c;white-space:nowrap;letter-spacing:.2px">注入字段:</div>

  <!-- table -->
  <div class="abs" style="left:20px;top:269px;width:440px;height:92px;border:1px solid #ebeef5"></div>
  <div class="abs" style="left:21px;top:300px;width:438px;height:1px;background:#ebeef5"></div>
  <div class="abs" style="left:69px;top:270px;width:1px;height:30px;background:#ebeef5"></div>
  <div class="abs th" style="left:28px;top:276px">序号</div>
  <div class="abs th" style="left:78px;top:276px">字段名称</div>

  <div class="abs btn" style="left:20px;top:369px;width:214px;border:1px solid #dcdfe6;color:#606266;background:#fff">取 消</div>
  <div class="abs btn" style="left:246px;top:369px;width:214px;background:#409eff;color:#fff;line-height:32px">保 存</div>

  <!-- dropdown -->
  <div id="dd">
    <div class="opt hov" style="top:6px">Java 类</div>
    <div class="opt" style="top:40px">表达式</div>
    <div class="opt" style="top:74px">代理表达式</div>
    <div class="opt" style="top:108px">脚本</div>
  </div>
  <svg class="abs" style="left:281px;top:182px" width="14" height="8" viewBox="0 0 14 8"><path d="M0 7.500L7 .8L14 7.500" fill="#fff" stroke="#e4e7ed" stroke-width="1"/><path d="M1 8L7 2L13 8Z" fill="#fff"/></svg>

  <!-- highlight rect -->
  <div class="abs" style="left:18px;top:140px;width:449px;height:157px;border:3px solid #ff3371"></div>
</div>

</body>
</html>
